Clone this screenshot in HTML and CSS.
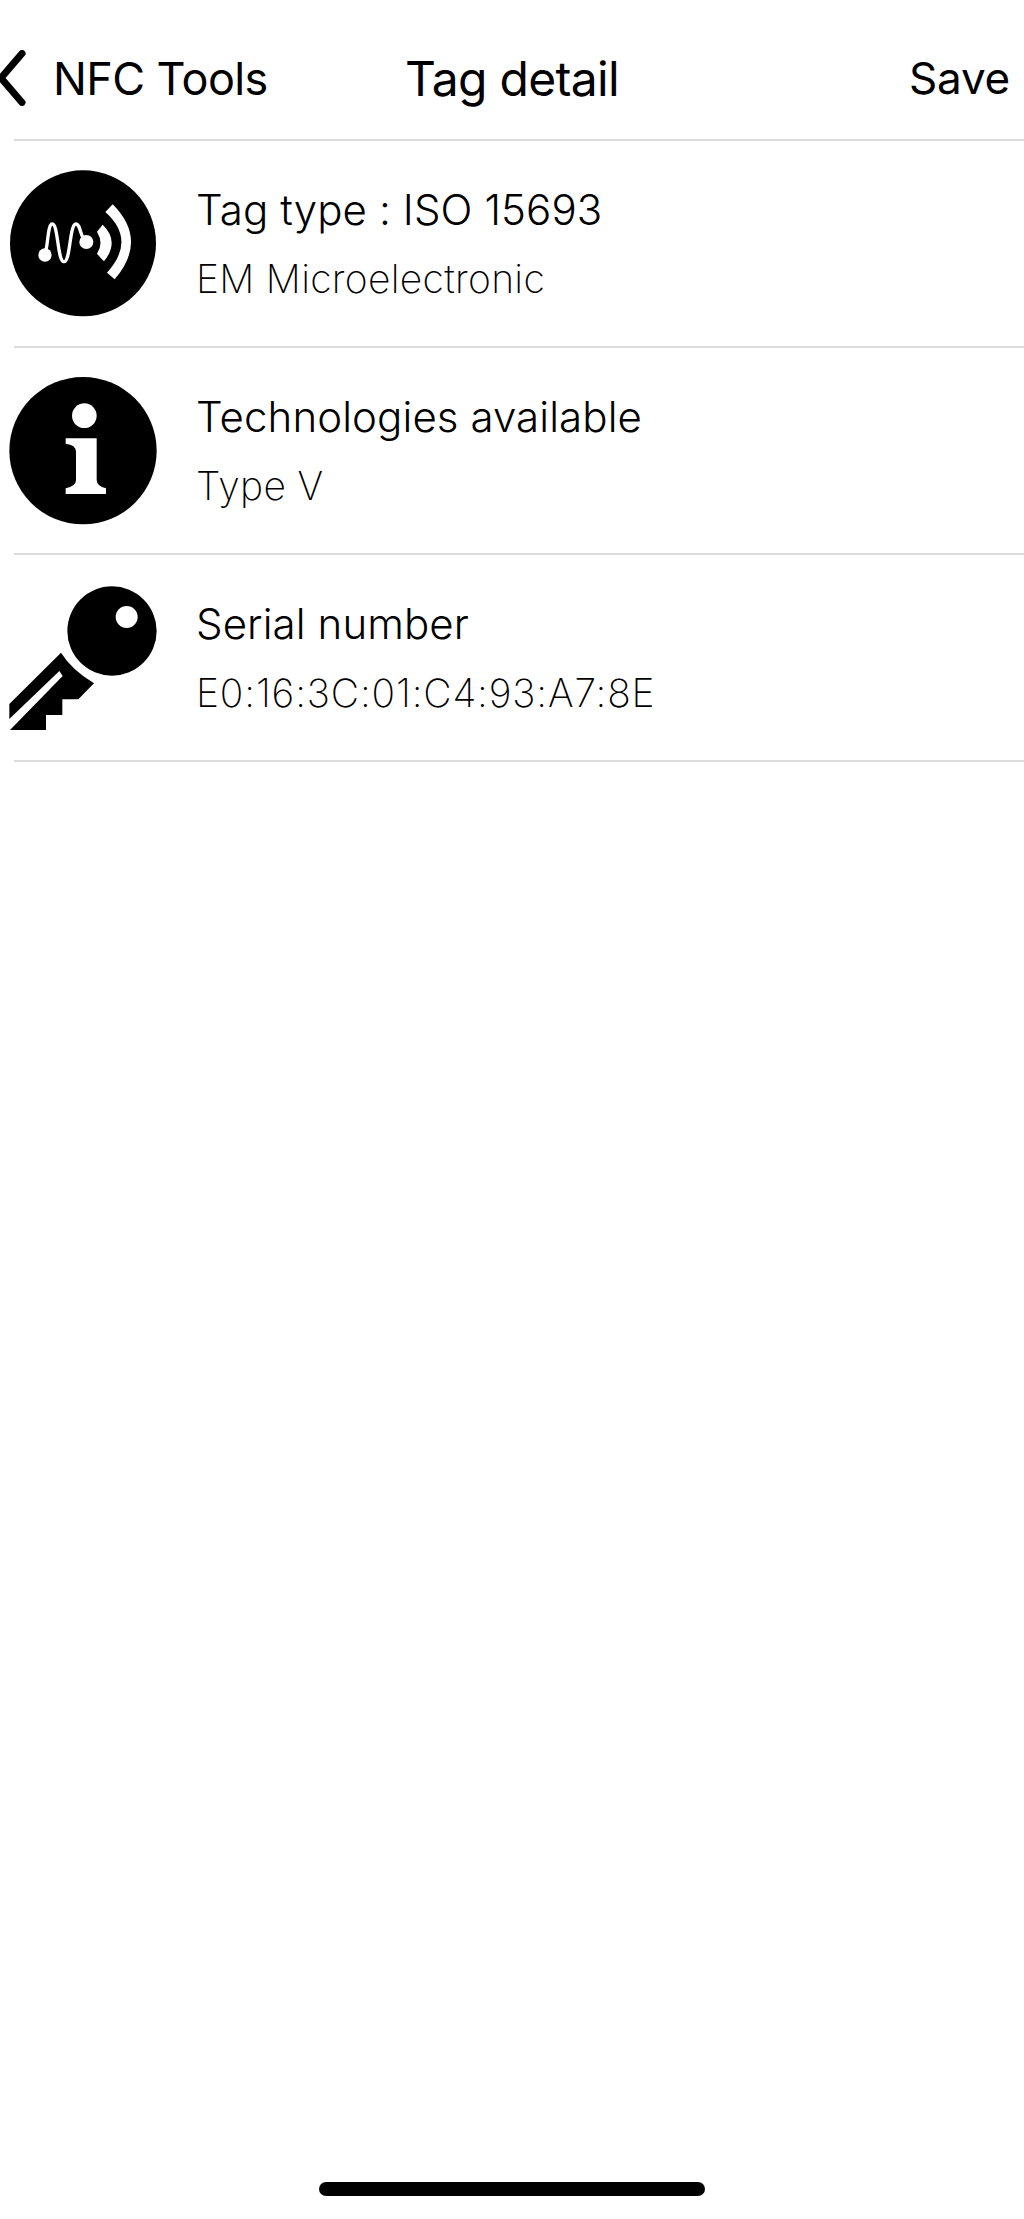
FILE: index.html
```html
<!DOCTYPE html>
<html lang="en">
<head>
<meta charset="utf-8">
<title>Tag detail</title>
<link rel="stylesheet" href="styles.css">
</head>
<body>
<div class="screen">
  <header class="nav">
    <div class="nav-back">
      <svg class="chevron" viewBox="0 0 28 56" aria-hidden="true"><path d="M24 3.500 L3 28 L24 52.500" /></svg>
      <span class="nav-back-label">NFC Tools</span>
    </div>
    <h1 class="nav-title">Tag detail</h1>
    <span class="nav-save">Save</span>
  </header>
  <main class="list">
    <section class="row">
      <svg class="icon" viewBox="27 60 444 444" aria-hidden="true">
        <circle cx="249" cy="280" r="219" fill="#000"/>
        <path class="wave" d="M135 315 C145 280 143 222 157 222 C175 222 172 335 192 335 C212 335 208 222 228 222 C242 222 240 262 258 275"/>
        <circle cx="135" cy="315" r="20" fill="#fff"/>
        <circle cx="259" cy="276" r="21" fill="#fff"/>
        <path fill="#fff" d="M308 224 Q360 274 312 334 Q300 322 291 311 Q312 280 291 245 Z"/>
        <path fill="#fff" d="M338 163 Q445 270 344 388 L321 368 Q410 270 316 186 Z"/>
      </svg>
      <div class="texts">
        <div class="title">Tag type : ISO 15693</div>
        <div class="sub">EM Microelectronic</div>
      </div>
    </section>
    <section class="row">
      <svg class="icon" viewBox="27 51 444 444" aria-hidden="true">
        <circle cx="249" cy="272" r="221" fill="#000"/>
        <circle cx="253" cy="167" r="37" fill="#fff"/>
        <path fill="#fff" d="M197 235 L290 235 L290 360 Q290 378 318 385 L318 402 L197 402 L197 385 Q228 378 228 360 L228 276 Q228 254 197 251 Z"/>
      </svg>
      <div class="texts">
        <div class="title">Technologies available</div>
        <div class="sub">Type V</div>
      </div>
    </section>
    <section class="row">
      <svg class="icon" viewBox="27 42 444 444" aria-hidden="true">
        <circle cx="336" cy="183" r="134" fill="#000"/>
        <circle cx="380" cy="141" r="33" fill="#fff"/>
        <path fill="#000" d="M183 248 L28 402 L28 447 L178 303 L188 318 L30 480 L138 480 L138 435 L187 435 L187 388 L235 388 L282 340 Q214 298 183 248 Z"/>
      </svg>
      <div class="texts">
        <div class="title">Serial number</div>
        <div class="sub sub-serial">E0:16:3C:01:C4:93:A7:8E</div>
      </div>
    </section>
  </main>
  <div class="home-bar"></div>
</div>
</body>
</html>
```
FILE: styles.css
```css
* { box-sizing: border-box; }
html, body { margin: 0; padding: 0; background: #fff; }
body { font-family: Inter, "Liberation Sans", sans-serif; color: #000; }
.screen { width: 1024px; height: 2219px; display: flex; flex-direction: column; overflow: hidden; }

.nav { height: 141px; margin-left: 14px; border-bottom: 2px solid #dcdcdc; display: grid; grid-template-columns: 1fr auto 1fr; align-items: center; padding: 17px 14px 0 0; }
.nav-back { display: flex; align-items: center; margin-left: -16px; }
.chevron { width: 28px; height: 56px; fill: none; stroke: #000; stroke-width: 7; stroke-linecap: round; stroke-linejoin: miter; margin-right: 27px; }
.nav-back-label { font-size: 45px; font-weight: 400; letter-spacing: -0.6px; }
.nav-title { margin: 0; font-size: 48px; font-weight: 400; letter-spacing: -0.7px; }
.nav-save { justify-self: end; font-size: 44px; font-weight: 400; letter-spacing: -0.2px; }

.list { flex: 1; }
.row { height: 207px; margin-left: 14px; border-bottom: 2px solid #dcdcdc; display: flex; align-items: center; }
.icon { width: 148px; height: 148px; margin-left: -5px; flex: none; }
.wave { fill: none; stroke: #fff; stroke-width: 10; stroke-linecap: round; }
.texts { margin-left: 39px; display: flex; flex-direction: column; gap: 26px; margin-top: 0; }
.title { font-size: 42px; line-height: 44px; font-weight: 300; color: #000; letter-spacing: 0.1px; }
.sub { font-size: 39px; line-height: 42px; font-weight: 200; color: #000; letter-spacing: 0.3px; }
.sub-serial { letter-spacing: 0.85px; }

.home-bar { width: 386px; height: 14px; border-radius: 7px; background: #000; align-self: center; margin-bottom: 23px; }
```
